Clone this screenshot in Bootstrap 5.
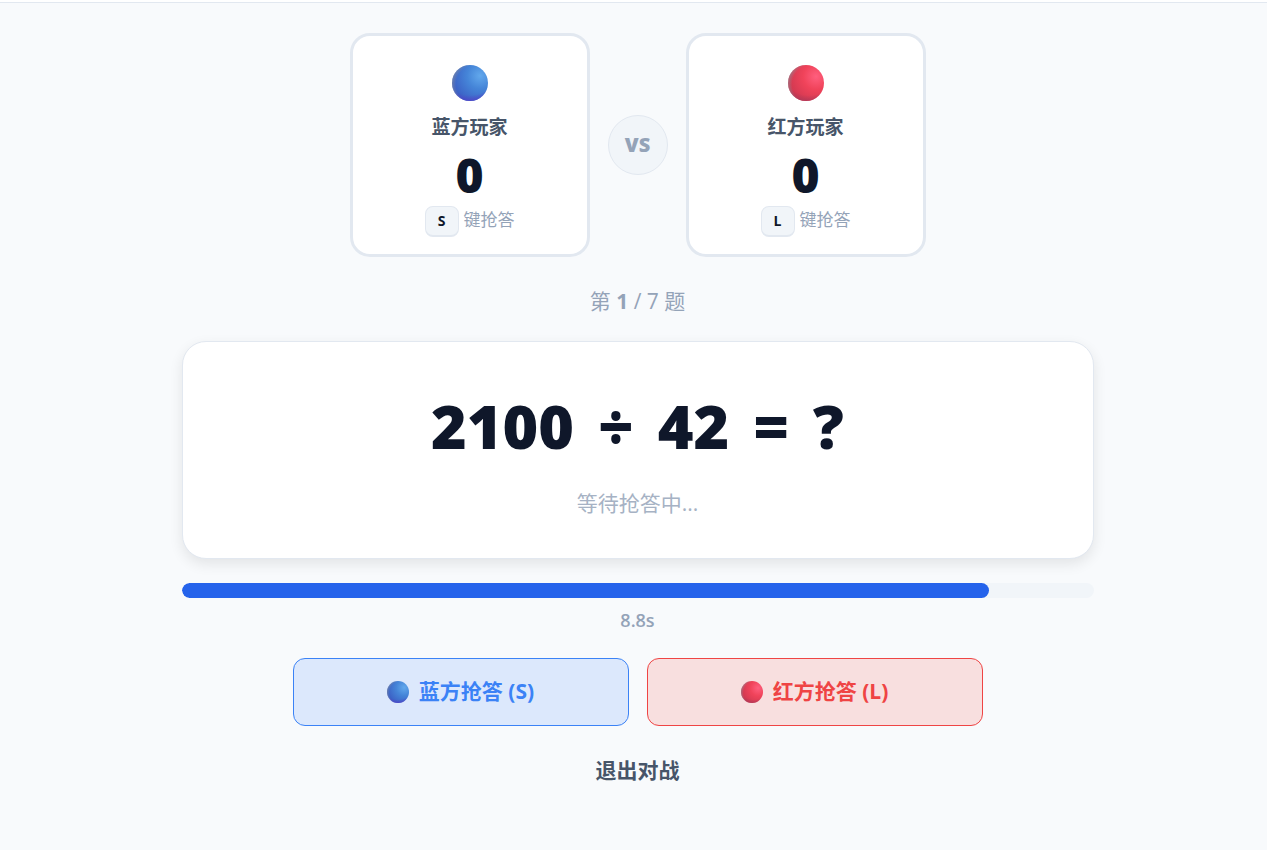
<!DOCTYPE html>
<html lang="zh-CN">
<head>
<meta charset="utf-8">
<meta name="viewport" content="width=device-width, initial-scale=1">
<title>口算对战</title>
<link href="https://cdn.jsdelivr.net/npm/bootstrap@5.3.0/dist/css/bootstrap.min.css" rel="stylesheet">
<style>
  body { background: #f8fafc; color: #0f172a; font-family: "Open Sans", "Noto Sans CJK SC", sans-serif; }
  .topbar { height: 3px; background: #fff; border-bottom: 1px solid #e2e8f0; }
  .arena { max-width: 936px; padding: 30px 12px 32px; }
  .arena-wrap { padding-left: 8px; }
  .players { gap: 18px; }
  .player { width: 240px; padding: 29px 16px 17px; border: 3px solid #e2e8f0; border-radius: 20px; }
  .ball-lg { width: 36px; height: 36px; margin-bottom: 13px; }
  .ball-sm { width: 22px; height: 22px; }
  .player-name { font-size: 19px; line-height: 26px; font-weight: 700; color: #475569; margin-bottom: 11px; }
  .score { font-size: 48px; line-height: 48px; font-weight: 800; margin-bottom: 7px; }
  .key-hint { font-size: 17px; line-height: 28px; color: #94a3b8; gap: 5px; }
  .key-hint span { padding-bottom: 3px; }
  .key-hint kbd { width: 34px; height: 31px; padding: 0; font: 700 14px/28px "Open Sans", sans-serif; color: #0f172a; background: #f1f5f9; border: 1px solid #e2e8f0; border-bottom-width: 2px; border-radius: 8px; }
  .versus { width: 60px; height: 60px; font-size: 20px; font-weight: 800; color: #94a3b8; background: #f1f5f9; border: 1px solid #e2e8f0; }
  .round-label { font-size: 21px; line-height: 30px; color: #94a3b8; margin: 29px 0 25px; }
  .question { padding: 40px 24px; border: 1px solid #e2e8f0; border-radius: 24px; box-shadow: 0 5px 14px rgba(0, 0, 0, .09); }
  .formula { font-size: 61px; line-height: 88px; font-weight: 800; gap: 24px; margin-bottom: 18px; }
  .status { font-size: 21px; line-height: 30px; color: #a6b2c4; }
  .timer { height: 15px; margin-top: 24px; border-radius: 8px; background: #f1f5f9; }
  .timer .progress-bar { background: #2563eb; border-radius: 8px; }
  .seconds { font-size: 18px; line-height: 24px; font-weight: 600; color: #94a3b8; margin: 10px 0 26px; }
  .buzzers { gap: 18px; }
  .buzz { width: 336px; height: 68px; font-size: 21px; font-weight: 700; gap: 10px; border-radius: 12px; }
  .buzz-blue, .buzz-blue:hover { color: #3b82f6; background: #dce8fc; border-color: #3b82f6; }
  .buzz-red, .buzz-red:hover { color: #ef4444; background: #f8dfdf; border-color: #ef4444; }
  .leave { margin-top: 23px; height: 44px; font-size: 21px; font-weight: 700; color: #475569; border: 0; }
</style>
</head>
<body>
<svg width="0" height="0" class="position-absolute" aria-hidden="true">
  <defs>
    <radialGradient id="blueBase" cx=".78" cy=".3" r=".8">
      <stop offset="0" stop-color="#62a8ec"/><stop offset=".45" stop-color="#4585d8"/><stop offset="1" stop-color="#3b5fc4"/>
    </radialGradient>
    <radialGradient id="blueLow" cx=".5" cy="0" r="1.02">
      <stop offset=".82" stop-color="#5046c8" stop-opacity="0"/><stop offset="1" stop-color="#5046c8"/>
    </radialGradient>
    <radialGradient id="redBase" cx=".78" cy=".32" r=".8">
      <stop offset="0" stop-color="#ff5f7e"/><stop offset=".45" stop-color="#f0435a"/><stop offset="1" stop-color="#cf3850"/>
    </radialGradient>
    <radialGradient id="redLow" cx=".6" cy="0" r="1.05">
      <stop offset=".8" stop-color="#ad3858" stop-opacity="0"/><stop offset="1" stop-color="#ad3858"/>
    </radialGradient>
    <radialGradient id="edge" cx=".66" cy=".54" r=".68">
      <stop offset=".8" stop-color="#8a929c" stop-opacity="0"/><stop offset="1" stop-color="#8a929c" stop-opacity=".65"/>
    </radialGradient>
    <symbol id="ball-blue" viewBox="0 0 36 36"><circle cx="18" cy="18" r="18" fill="url(#blueBase)"/><circle cx="18" cy="18" r="18" fill="url(#blueLow)"/><circle cx="18" cy="18" r="18" fill="url(#edge)"/></symbol>
    <symbol id="ball-red" viewBox="0 0 36 36"><circle cx="18" cy="18" r="18" fill="url(#redBase)"/><circle cx="18" cy="18" r="18" fill="url(#redLow)"/><circle cx="18" cy="18" r="18" fill="url(#edge)"/></symbol>
  </defs>
</svg>
<header class="topbar"></header>
<div class="arena-wrap">
<main class="arena container-fluid mx-auto text-center">
  <section class="players d-flex flex-wrap justify-content-center align-items-center">
    <div class="player bg-white d-flex flex-column align-items-center">
      <svg class="ball-lg" aria-hidden="true"><use href="#ball-blue"/></svg>
      <div class="player-name">蓝方玩家</div>
      <div class="score">0</div>
      <div class="key-hint d-flex align-items-center"><kbd>S</kbd><span>键抢答</span></div>
    </div>
    <div class="versus rounded-circle d-flex align-items-center justify-content-center">VS</div>
    <div class="player bg-white d-flex flex-column align-items-center">
      <svg class="ball-lg" aria-hidden="true"><use href="#ball-red"/></svg>
      <div class="player-name">红方玩家</div>
      <div class="score">0</div>
      <div class="key-hint d-flex align-items-center"><kbd>L</kbd><span>键抢答</span></div>
    </div>
  </section>
  <p class="round-label">第 <strong>1</strong> / 7 题</p>
  <section class="question bg-white">
    <div class="formula d-flex flex-wrap justify-content-center"><span>2100</span><span>÷</span><span>42</span><span>=</span><span>?</span></div>
    <div class="status">等待抢答中...</div>
  </section>
  <div class="timer progress" role="progressbar" aria-label="剩余时间" aria-valuenow="88" aria-valuemin="0" aria-valuemax="100">
    <div class="progress-bar" style="width: 88.5%"></div>
  </div>
  <div class="seconds">8.8s</div>
  <div class="buzzers d-flex flex-wrap justify-content-center">
    <button type="button" class="buzz buzz-blue btn d-flex align-items-center justify-content-center"><svg class="ball-sm" aria-hidden="true"><use href="#ball-blue"/></svg><span>蓝方抢答 (S)</span></button>
    <button type="button" class="buzz buzz-red btn d-flex align-items-center justify-content-center"><svg class="ball-sm" aria-hidden="true"><use href="#ball-red"/></svg><span>红方抢答 (L)</span></button>
  </div>
  <button type="button" class="leave btn">退出对战</button>
</main>
</div>
<script src="https://cdn.jsdelivr.net/npm/bootstrap@5.3.0/dist/js/bootstrap.bundle.min.js"></script>
</body>
</html>
